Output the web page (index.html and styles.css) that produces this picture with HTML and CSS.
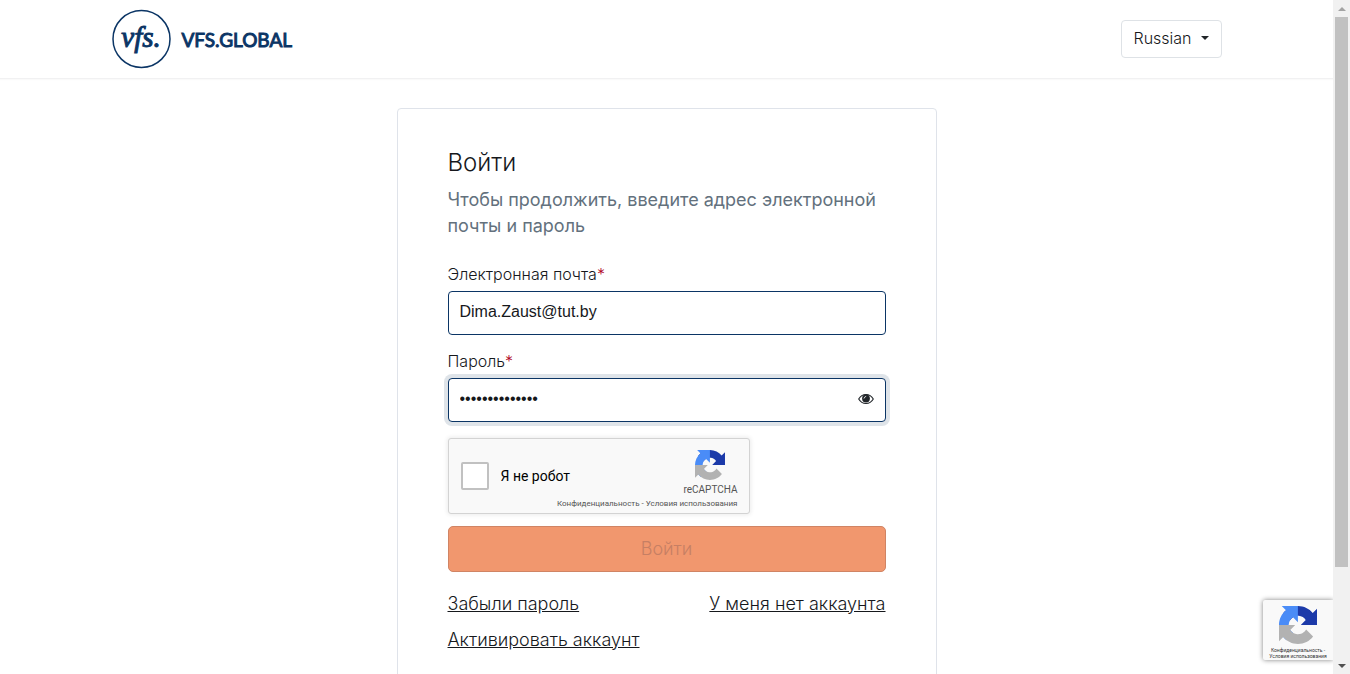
FILE: index.html
```html
<!DOCTYPE html>
<html lang="ru">
<head>
<meta charset="utf-8">
<meta name="viewport" content="width=device-width, initial-scale=1">
<title>VFS Global</title>
<link rel="stylesheet" href="styles.css">
</head>
<body>
<svg class="sprite" aria-hidden="true">
  <symbol id="recaptcha" viewBox="0 0 64 64">
    <path fill="#1c3aa9" d="M64 31.955l-.033-1.37V4.687l-7.16 7.16C50.948 4.674 42.033.093 32.05.093c-10.4 0-19.622 4.96-25.458 12.64l11.736 11.86a15.55 15.55 0 0 1 4.754-5.334c2.05-1.6 4.952-2.906 8.968-2.906.485 0 .86.057 1.135.163 4.976.393 9.288 3.14 11.828 7.124l-8.307 8.307L64 31.953"/>
    <path fill="#4a8cf7" d="M31.862.094l-1.37.033H4.594l7.16 7.16C4.58 13.147 0 22.06 0 32.046c0 10.4 4.96 19.622 12.64 25.458L24.5 45.768a15.55 15.55 0 0 1-5.334-4.754c-1.6-2.05-2.906-4.952-2.906-8.968 0-.485.057-.86.163-1.135.393-4.976 3.14-9.288 7.124-11.828l8.307 8.307L31.86.095"/>
    <path fill="#b2b2b2" d="M.001 32.045l.033 1.37v25.898l7.16-7.16c5.86 7.173 14.774 11.754 24.76 11.754 10.4 0 19.622-4.96 25.458-12.64l-11.736-11.86a15.55 15.55 0 0 1-4.754 5.334c-2.05 1.6-4.952 2.906-8.968 2.906-.485 0-.86-.057-1.135-.163-4.976-.393-9.288-3.14-11.828-7.124l8.307-8.307c-10.522.04-22.4.066-27.295-.005"/>
  </symbol>
</svg>
<div class="window">
  <div class="page">
    <header class="header">
      <div class="container header-row">
        <a class="brand" href="#">
          <svg class="brand-mark" viewBox="0 0 60 60" aria-hidden="true">
            <circle cx="29.500" cy="30" r="28.500" fill="none" stroke="#0b3565" stroke-width="1.500"/>
            <text class="brand-script" x="29" y="38" text-anchor="middle">vfs.</text>
          </svg>
          <span class="brand-name">VFS.GLOBAL</span>
        </a>
        <div class="language">
          <select class="language-select" aria-label="Language">
            <option>Russian</option>
          </select>
          <span class="caret"></span>
        </div>
      </div>
    </header>
    <main class="container main">
      <form class="card">
        <h1 class="title">Войти</h1>
        <p class="lead">Чтобы продолжить, введите адрес электронной почты и пароль</p>
        <div class="field">
          <label class="label" for="email">Электронная почта<span class="required">*</span></label>
          <input class="input" id="email" type="text" value="Dima.Zaust@tut.by">
        </div>
        <div class="field">
          <label class="label" for="password">Пароль<span class="required">*</span></label>
          <div class="password">
            <input class="input input-focused" id="password" type="password" value="12345678901234">
            <button class="reveal" type="button" aria-label="Показать пароль">
              <svg viewBox="0 0 16 12" width="16" height="12">
                <path d="M.7 6C2.300 3.200 5 1.500 8 1.500S13.700 3.200 15.300 6C13.700 8.800 11 10.500 8 10.500S2.300 8.800.7 6z" fill="#fff" stroke="#212529" stroke-width="1.100"/>
                <circle cx="8" cy="5.500" r="3.900" fill="#212529"/>
                <path d="M6 5.200A2.200 2.200 0 0 1 7.800 3.400" fill="none" stroke="#fff" stroke-width=".8" stroke-linecap="round"/>
              </svg>
            </button>
          </div>
        </div>
        <div class="captcha">
          <label class="robot"><input class="tick" type="checkbox">Я не робот</label>
          <div class="captcha-brand">
            <svg class="captcha-logo"><use href="#recaptcha"/></svg>
            <span>reCAPTCHA</span>
          </div>
          <div class="terms"><a href="#">Конфиденциальность</a> - <a href="#">Условия использования</a></div>
        </div>
        <button class="submit" type="submit" disabled>Войти</button>
        <nav class="links">
          <a href="#">Забыли пароль</a>
          <a href="#">У меня нет аккаунта</a>
          <a href="#">Активировать аккаунт</a>
        </nav>
      </form>
    </main>
    <aside class="badge">
      <svg class="badge-logo"><use href="#recaptcha"/></svg>
      <div class="badge-terms"><a href="#">Конфиденциальность</a> -<br><a href="#">Условия использования</a></div>
    </aside>
  </div>
  <div class="scrollbar" aria-hidden="true">
    <span class="arrow arrow-up"></span>
    <div class="track"><div class="thumb"></div></div>
    <span class="arrow arrow-down"></span>
  </div>
</div>
</body>
</html>
```
FILE: styles.css
```css
* {
  box-sizing: border-box;
}

body {
  margin: 0;
  font-family: Inter, "Open Sans", sans-serif;
  font-weight: 300;
  font-size: 16px;
  line-height: 24px;
  color: #16181c;
  background: #fff;
}

a {
  color: inherit;
}

.sprite {
  position: absolute;
  width: 0;
  height: 0;
}

.window {
  display: flex;
  height: 100vh;
  overflow: hidden;
}

.page {
  position: relative;
  flex: 1;
  min-width: 0;
  overflow: hidden;
}

.container {
  max-width: 1140px;
  margin: 0 auto;
  padding: 0 15px;
}

.header {
  border-bottom: 1px solid #f1f1f2;
  box-shadow: 0 1px 1px #fafafa;
}

.header-row {
  display: flex;
  align-items: center;
  justify-content: space-between;
  min-height: 78px;
}

.brand {
  display: flex;
  align-items: center;
  gap: 10px;
  color: #0b3565;
  text-decoration: none;
}

.brand-mark {
  width: 60px;
  height: 60px;
}

.brand-script {
  font-family: "Liberation Serif", serif;
  font-size: 29px;
  font-style: italic;
  font-weight: 400;
  fill: #0b3565;
  stroke: #0b3565;
  stroke-width: 1px;
}

.brand-name {
  padding-top: 2px;
  font-family: Lato, sans-serif;
  font-size: 19px;
  font-weight: 400;
  -webkit-text-stroke: 1px #0b3565;
}

.language {
  position: relative;
}

.language-select {
  appearance: none;
  height: 38px;
  padding: 0 28px 2px 12px;
  border: 1px solid #dee2e6;
  border-radius: 4px;
  background: #fff;
  color: inherit;
  font: inherit;
}

.caret {
  position: absolute;
  top: 16px;
  right: 13px;
  border: 4px solid transparent;
  border-top-color: #212529;
  border-bottom: 0;
  pointer-events: none;
}

.main {
  padding-top: 29px;
}

.card {
  max-width: 540px;
  margin: 0 auto;
  padding: 36px 50px 60px;
  border: 1px solid #dfe3ea;
  border-radius: 4px;
}

.title {
  margin: 0 0 6px;
  font-size: 24px;
  font-weight: 300;
  line-height: 36px;
}

.lead {
  margin: 0 0 23px;
  color: #63717d;
  font-size: 18px;
  font-weight: 400;
  line-height: 26px;
}

.field {
  margin-bottom: 14px;
}

.label {
  display: block;
  margin-bottom: 5px;
}

.required {
  color: #b00020;
}

.input {
  display: block;
  width: 100%;
  height: 44px;
  padding: 6px 11px 9px;
  border: 1px solid #0b3565;
  border-radius: 4px;
  background: #fff;
  color: #16181c;
  font-family: "Liberation Sans", sans-serif;
  font-size: 16px;
}

.input-focused {
  box-shadow: 0 0 0 4px #dfe4e9;
}

.password {
  position: relative;
}

.reveal {
  position: absolute;
  top: 15px;
  right: 12px;
  display: flex;
  padding: 0;
  border: 0;
  background: none;
}

.captcha {
  display: grid;
  grid-template-columns: 1fr auto;
  grid-template-rows: 59px 15px;
  max-width: 302px;
  margin: 16px 0 12px;
  padding: 0 11px 0 12px;
  border: 1px solid #d3d3d3;
  border-radius: 3px;
  background: #f9f9f9;
  box-shadow: 0 0 4px 1px rgba(0, 0, 0, 0.08);
  color: #000;
  font-family: Roboto, sans-serif;
  font-weight: 400;
}

.robot {
  display: flex;
  align-items: center;
  gap: 12px;
  padding-top: 14px;
  font-size: 14px;
}

.tick {
  appearance: none;
  width: 28px;
  height: 28px;
  margin: 0;
  border: 2px solid #c1c1c1;
  border-radius: 2px;
  background: #fff;
}

.captcha-brand {
  display: flex;
  flex-direction: column;
  align-items: center;
  gap: 2px;
  padding-top: 11px;
  color: #555;
  font-size: 10px;
  line-height: 16px;
}

.captcha-logo {
  width: 30px;
  height: 30px;
}

.terms {
  grid-column: 1 / -1;
  color: #555;
  font-size: 8px;
  line-height: 12px;
  text-align: right;
}

.terms a,
.badge-terms a {
  text-decoration: none;
}

.submit {
  display: block;
  width: 100%;
  height: 46px;
  padding: 0;
  border: 1px solid #d08464;
  border-radius: 5px;
  background: #f1976e;
  color: #c67f64;
  font: inherit;
  font-size: 18px;
}

.links {
  display: flex;
  flex-wrap: wrap;
  justify-content: space-between;
  gap: 10px 24px;
  margin-top: 19px;
  font-size: 18px;
  line-height: 26px;
}

.badge {
  position: absolute;
  right: 0;
  bottom: 14px;
  display: flex;
  flex-direction: column;
  align-items: center;
  width: 70px;
  height: 60px;
  padding-top: 6px;
  border-radius: 2px 0 0 2px;
  background: #f9f9f9;
  box-shadow: 0 0 5px #808080;
  color: #333;
  font-family: Roboto, sans-serif;
  font-weight: 400;
}

.badge-logo {
  width: 38px;
  height: 38px;
}

.badge-terms {
  margin-top: 3px;
  font-size: 5px;
  line-height: 6px;
  text-align: center;
  white-space: nowrap;
}

.scrollbar {
  display: flex;
  flex-direction: column;
  align-items: center;
  width: 17px;
  background: #f1f1f1;
}

.arrow {
  margin: 7px 0 6px;
  border: 4px solid transparent;
}

.arrow-up {
  border-top: 0;
  border-bottom-color: #a3a3a3;
}

.arrow-down {
  border-bottom: 0;
  border-top-color: #505050;
}

.track {
  flex: 1;
}

.thumb {
  width: 13px;
  height: 86%;
  background: #c1c1c1;
}
```
